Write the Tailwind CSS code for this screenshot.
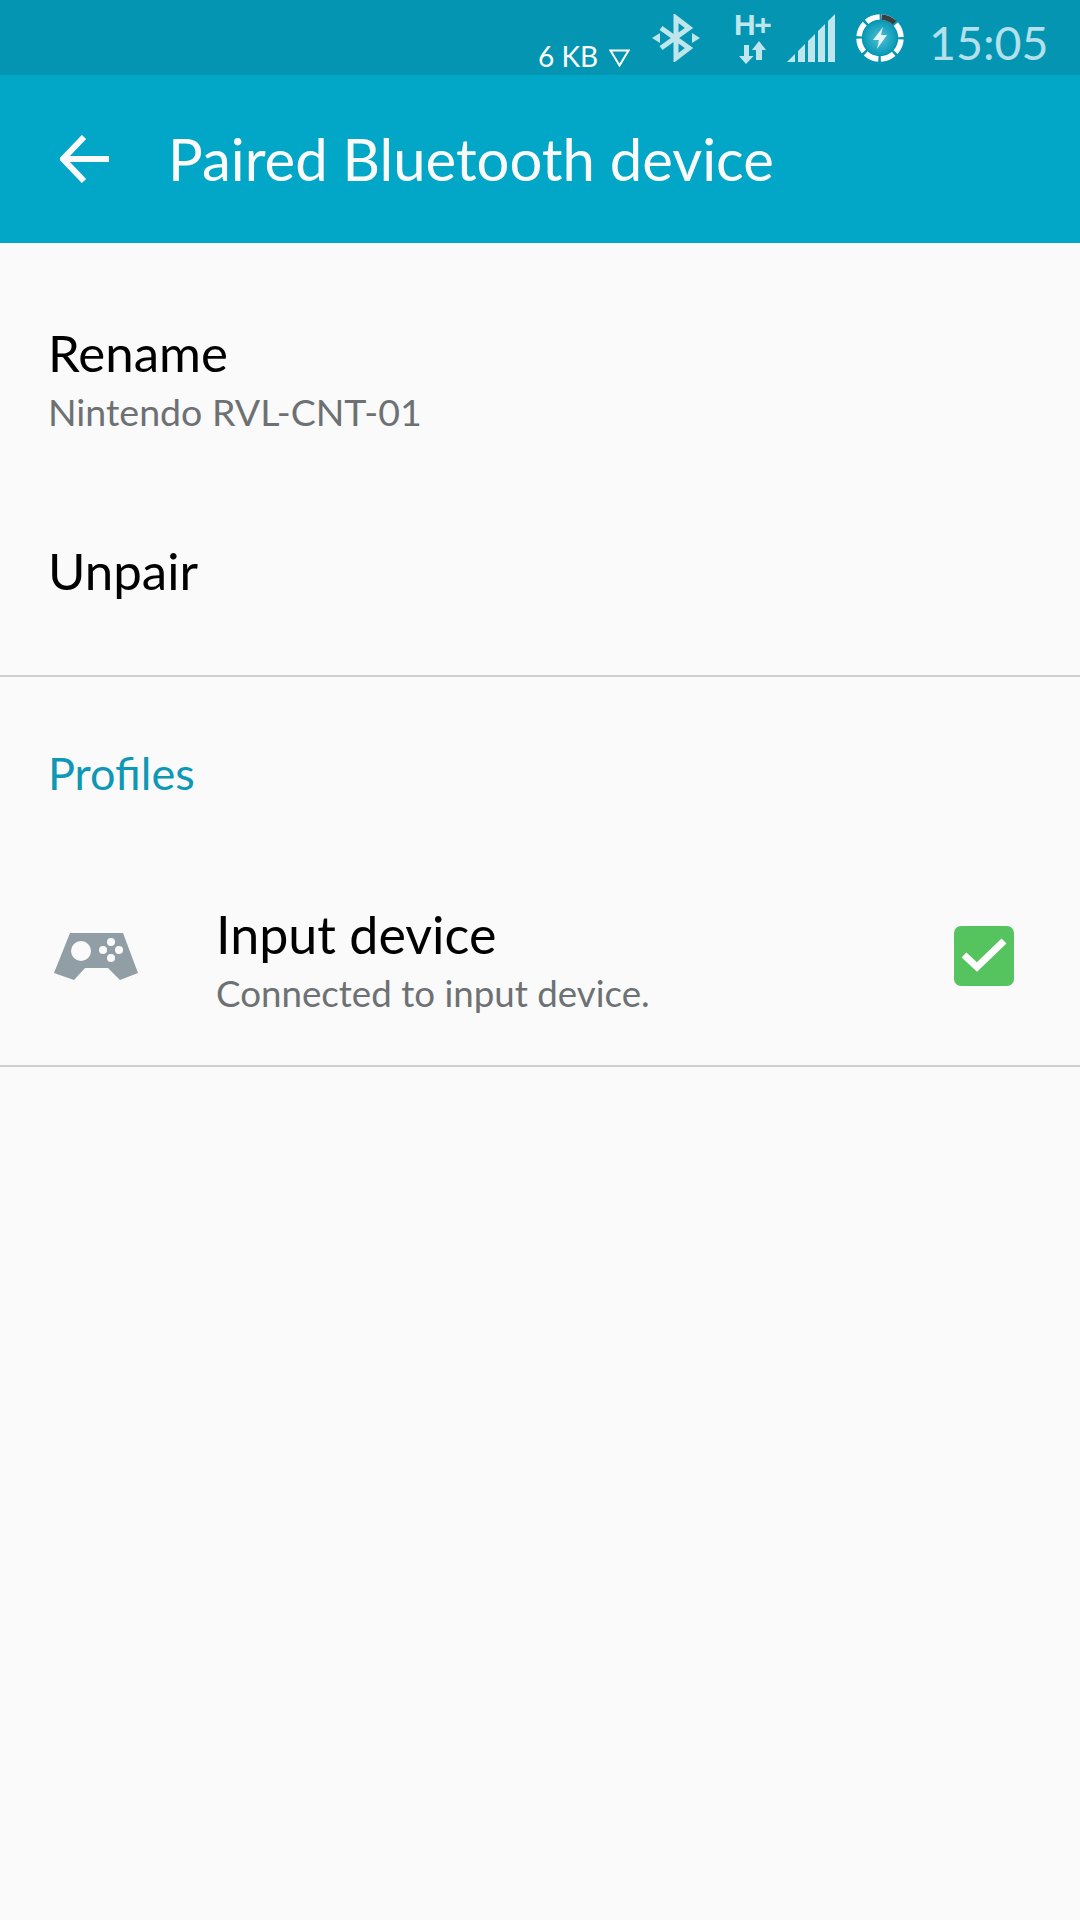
<!DOCTYPE html>
<html lang="en">

<head>
    <meta charset="UTF-8">
    <meta name="viewport" content="width=device-width, initial-scale=1.0">
    <title>Paired Bluetooth device</title>
    <script src="https://cdn.jsdelivr.net/npm/@tailwindcss/browser@4"></script>
</head>

<body class="bg-[#fafafa] font-['Lato',sans-serif]">
    <div class="w-[1080px] h-[1920px] overflow-hidden">
        <!-- status bar -->
        <div class="h-[75px] bg-[#0495b2] flex items-start pl-[538px]">
            <span class="mt-[40px] w-[71px] text-[28px] leading-[32px] text-white whitespace-nowrap">6 KB</span>
            <svg class="mt-[49px]" width="21" height="18" viewBox="0 0 21 18" fill="none">
                <path d="M1.5 1.5H19.5L10.5 16.5Z" stroke="#fff" stroke-width="2" />
            </svg>
            <svg class="mt-[14px] ml-[22px]" width="48" height="48" viewBox="0 0 48 48" fill="none">
                <path d="M9 14L37 34L24 44V4L37 14L9 34" stroke="#bfe5ed" stroke-width="5" />
                <path d="M0 24L8 19V29ZM48 24L40 19V29Z" fill="#bfe5ed" />
            </svg>
            <div class="mt-[10px] ml-[34px] w-[36px] flex flex-col items-start">
                <span class="font-['Liberation_Sans',sans-serif] text-[30px] leading-[30px] font-bold tracking-[-1.5px] text-[#bfe5ed] whitespace-nowrap">H+</span>
                <svg class="mt-[1px] ml-[5px]" width="27" height="23" viewBox="0 0 27 23" fill="#bfe5ed">
                    <path d="M5 4H10V15H14.5L7 23L0 15H5ZM17 19H23V9H27L20 0L13 9H17Z" />
                </svg>
            </div>
            <svg class="mt-[14px] ml-[17px]" width="48" height="48" viewBox="0 0 48 48" fill="#bfe5ed">
                <path d="M0 48L8 40V48ZM11 37L18 30V48H11ZM21 27L28 20V48H21ZM31 17L38 10V48H31ZM41 7L48 0V48H41Z" />
            </svg>
            <svg class="mt-[14px] ml-[21px]" width="48" height="48" viewBox="0 0 48 48" fill="none">
                <defs>
                    <radialGradient id="glow">
                        <stop offset="0" stop-color="#4fbfd6" />
                        <stop offset="1" stop-color="#0a9ab6" />
                    </radialGradient>
                </defs>
                <circle cx="24" cy="24" r="17" fill="url(#glow)" />
                <circle cx="24" cy="24" r="21" stroke="#fff" stroke-width="5.5" stroke-dasharray="14 2.49" stroke-dashoffset="-1.25" transform="rotate(-90 24 24)" />
                <path d="M25.5 3A21 21 0 0 1 38.5 8.8" stroke="#3a3f42" stroke-width="5.5" />
                <path d="M27 13L17 26H23L21 35L31 21H25Z" fill="#e3f5f8" />
            </svg>
            <span class="mt-[15px] ml-[25px] text-[46.5px] leading-[54px] text-[#b3e0ea] whitespace-nowrap">15:05</span>
        </div>

        <!-- app bar -->
        <div class="h-[168px] bg-[#02a6c6] flex items-center pl-[60px]">
            <svg width="49" height="48" viewBox="0 0 49 48" fill="none">
                <path d="M24 2L3 24L24 46M3 24H49" stroke="#fafafa" stroke-width="6" />
            </svg>
            <span class="ml-[59px] text-[58px] leading-[60px] text-[#fafafa] whitespace-nowrap">Paired Bluetooth device</span>
        </div>

        <!-- device actions -->
        <div class="h-[434px] border-b-2 border-[#cfcfcf] pl-[48px] pt-[85px]">
            <div class="text-[51px] leading-[50px] text-black">Rename</div>
            <div class="mt-[12px] text-[37.5px] leading-[44px] text-[#6d7174]">Nintendo RVL-CNT-01</div>
            <div class="mt-[112px] text-[51px] leading-[50px] text-black">Unpair</div>
        </div>

        <!-- profiles -->
        <div class="pl-[48px] pt-[73px] text-[45px] leading-[46px] text-[#0e98b5]">Profiles</div>
        <div class="mt-[64px] h-[207px] border-b-2 border-[#cfcfcf] flex items-start pl-[54px]">
            <svg class="mt-[73px]" width="84" height="47" viewBox="0 0 84 47" fill="#919ea6">
                <path d="M16 0H69L84 40L66 47L54 35H31L20 47L0 40Z" />
                <circle cx="27" cy="18" r="10" fill="#fafafa" />
                <circle cx="57" cy="9" r="4" fill="#fafafa" />
                <circle cx="49" cy="17" r="4" fill="#fafafa" />
                <circle cx="65" cy="17" r="4" fill="#fafafa" />
                <circle cx="57" cy="25" r="4" fill="#fafafa" />
            </svg>
            <div class="ml-[78px] mt-[47px]">
                <div class="text-[52px] leading-[54px] text-black whitespace-nowrap">Input device</div>
                <div class="mt-[10px] text-[36.7px] leading-[44px] text-[#6d7174] whitespace-nowrap">Connected to input device.</div>
            </div>
            <div class="ml-auto mr-[66px] mt-[66px] w-[60px] h-[60px] rounded-[7px] bg-[#55c35e] flex items-center justify-center">
                <svg width="46" height="36" viewBox="0 0 46 36" fill="none">
                    <path d="M3 17L16 29L43 3" stroke="#fff" stroke-width="7" />
                </svg>
            </div>
        </div>
    </div>
</body>

</html>
